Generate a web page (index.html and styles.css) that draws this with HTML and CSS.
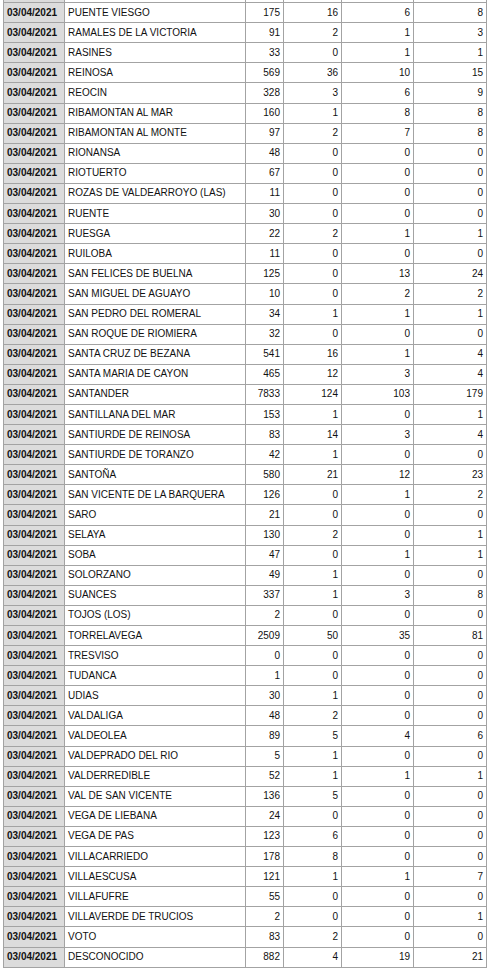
FILE: index.html
```html
<!DOCTYPE html>
<html lang="es">
<head>
<meta charset="utf-8">
<title>Casos por municipio</title>
<link rel="stylesheet" href="styles.css">
</head>
<body>
<table class="grid">
<colgroup>
<col class="c-date"><col class="c-name"><col class="c-n1"><col class="c-n2"><col class="c-n3"><col class="c-n4">
</colgroup>
<tbody>
<tr class="stub"><td class="date"></td><td class="name"></td><td class="num"></td><td class="num"></td><td class="num"></td><td class="num"></td></tr>
<tr><td class="date">03/04/2021</td><td class="name">PUENTE VIESGO</td><td class="num">175</td><td class="num">16</td><td class="num">6</td><td class="num">8</td></tr>
<tr><td class="date">03/04/2021</td><td class="name">RAMALES DE LA VICTORIA</td><td class="num">91</td><td class="num">2</td><td class="num">1</td><td class="num">3</td></tr>
<tr><td class="date">03/04/2021</td><td class="name">RASINES</td><td class="num">33</td><td class="num">0</td><td class="num">1</td><td class="num">1</td></tr>
<tr><td class="date">03/04/2021</td><td class="name">REINOSA</td><td class="num">569</td><td class="num">36</td><td class="num">10</td><td class="num">15</td></tr>
<tr><td class="date">03/04/2021</td><td class="name">REOCIN</td><td class="num">328</td><td class="num">3</td><td class="num">6</td><td class="num">9</td></tr>
<tr><td class="date">03/04/2021</td><td class="name">RIBAMONTAN AL MAR</td><td class="num">160</td><td class="num">1</td><td class="num">8</td><td class="num">8</td></tr>
<tr><td class="date">03/04/2021</td><td class="name">RIBAMONTAN AL MONTE</td><td class="num">97</td><td class="num">2</td><td class="num">7</td><td class="num">8</td></tr>
<tr><td class="date">03/04/2021</td><td class="name">RIONANSA</td><td class="num">48</td><td class="num">0</td><td class="num">0</td><td class="num">0</td></tr>
<tr><td class="date">03/04/2021</td><td class="name">RIOTUERTO</td><td class="num">67</td><td class="num">0</td><td class="num">0</td><td class="num">0</td></tr>
<tr><td class="date">03/04/2021</td><td class="name">ROZAS DE VALDEARROYO (LAS)</td><td class="num">11</td><td class="num">0</td><td class="num">0</td><td class="num">0</td></tr>
<tr><td class="date">03/04/2021</td><td class="name">RUENTE</td><td class="num">30</td><td class="num">0</td><td class="num">0</td><td class="num">0</td></tr>
<tr><td class="date">03/04/2021</td><td class="name">RUESGA</td><td class="num">22</td><td class="num">2</td><td class="num">1</td><td class="num">1</td></tr>
<tr><td class="date">03/04/2021</td><td class="name">RUILOBA</td><td class="num">11</td><td class="num">0</td><td class="num">0</td><td class="num">0</td></tr>
<tr><td class="date">03/04/2021</td><td class="name">SAN FELICES DE BUELNA</td><td class="num">125</td><td class="num">0</td><td class="num">13</td><td class="num">24</td></tr>
<tr><td class="date">03/04/2021</td><td class="name">SAN MIGUEL DE AGUAYO</td><td class="num">10</td><td class="num">0</td><td class="num">2</td><td class="num">2</td></tr>
<tr><td class="date">03/04/2021</td><td class="name">SAN PEDRO DEL ROMERAL</td><td class="num">34</td><td class="num">1</td><td class="num">1</td><td class="num">1</td></tr>
<tr><td class="date">03/04/2021</td><td class="name">SAN ROQUE DE RIOMIERA</td><td class="num">32</td><td class="num">0</td><td class="num">0</td><td class="num">0</td></tr>
<tr><td class="date">03/04/2021</td><td class="name">SANTA CRUZ DE BEZANA</td><td class="num">541</td><td class="num">16</td><td class="num">1</td><td class="num">4</td></tr>
<tr><td class="date">03/04/2021</td><td class="name">SANTA MARIA DE CAYON</td><td class="num">465</td><td class="num">12</td><td class="num">3</td><td class="num">4</td></tr>
<tr><td class="date">03/04/2021</td><td class="name">SANTANDER</td><td class="num">7833</td><td class="num">124</td><td class="num">103</td><td class="num">179</td></tr>
<tr><td class="date">03/04/2021</td><td class="name">SANTILLANA DEL MAR</td><td class="num">153</td><td class="num">1</td><td class="num">0</td><td class="num">1</td></tr>
<tr><td class="date">03/04/2021</td><td class="name">SANTIURDE DE REINOSA</td><td class="num">83</td><td class="num">14</td><td class="num">3</td><td class="num">4</td></tr>
<tr><td class="date">03/04/2021</td><td class="name">SANTIURDE DE TORANZO</td><td class="num">42</td><td class="num">1</td><td class="num">0</td><td class="num">0</td></tr>
<tr><td class="date">03/04/2021</td><td class="name">SANTOÑA</td><td class="num">580</td><td class="num">21</td><td class="num">12</td><td class="num">23</td></tr>
<tr><td class="date">03/04/2021</td><td class="name">SAN VICENTE DE LA BARQUERA</td><td class="num">126</td><td class="num">0</td><td class="num">1</td><td class="num">2</td></tr>
<tr><td class="date">03/04/2021</td><td class="name">SARO</td><td class="num">21</td><td class="num">0</td><td class="num">0</td><td class="num">0</td></tr>
<tr><td class="date">03/04/2021</td><td class="name">SELAYA</td><td class="num">130</td><td class="num">2</td><td class="num">0</td><td class="num">1</td></tr>
<tr><td class="date">03/04/2021</td><td class="name">SOBA</td><td class="num">47</td><td class="num">0</td><td class="num">1</td><td class="num">1</td></tr>
<tr><td class="date">03/04/2021</td><td class="name">SOLORZANO</td><td class="num">49</td><td class="num">1</td><td class="num">0</td><td class="num">0</td></tr>
<tr><td class="date">03/04/2021</td><td class="name">SUANCES</td><td class="num">337</td><td class="num">1</td><td class="num">3</td><td class="num">8</td></tr>
<tr><td class="date">03/04/2021</td><td class="name">TOJOS (LOS)</td><td class="num">2</td><td class="num">0</td><td class="num">0</td><td class="num">0</td></tr>
<tr><td class="date">03/04/2021</td><td class="name">TORRELAVEGA</td><td class="num">2509</td><td class="num">50</td><td class="num">35</td><td class="num">81</td></tr>
<tr><td class="date">03/04/2021</td><td class="name">TRESVISO</td><td class="num">0</td><td class="num">0</td><td class="num">0</td><td class="num">0</td></tr>
<tr><td class="date">03/04/2021</td><td class="name">TUDANCA</td><td class="num">1</td><td class="num">0</td><td class="num">0</td><td class="num">0</td></tr>
<tr><td class="date">03/04/2021</td><td class="name">UDIAS</td><td class="num">30</td><td class="num">1</td><td class="num">0</td><td class="num">0</td></tr>
<tr><td class="date">03/04/2021</td><td class="name">VALDALIGA</td><td class="num">48</td><td class="num">2</td><td class="num">0</td><td class="num">0</td></tr>
<tr><td class="date">03/04/2021</td><td class="name">VALDEOLEA</td><td class="num">89</td><td class="num">5</td><td class="num">4</td><td class="num">6</td></tr>
<tr><td class="date">03/04/2021</td><td class="name">VALDEPRADO DEL RIO</td><td class="num">5</td><td class="num">1</td><td class="num">0</td><td class="num">0</td></tr>
<tr><td class="date">03/04/2021</td><td class="name">VALDERREDIBLE</td><td class="num">52</td><td class="num">1</td><td class="num">1</td><td class="num">1</td></tr>
<tr><td class="date">03/04/2021</td><td class="name">VAL DE SAN VICENTE</td><td class="num">136</td><td class="num">5</td><td class="num">0</td><td class="num">0</td></tr>
<tr><td class="date">03/04/2021</td><td class="name">VEGA DE LIEBANA</td><td class="num">24</td><td class="num">0</td><td class="num">0</td><td class="num">0</td></tr>
<tr><td class="date">03/04/2021</td><td class="name">VEGA DE PAS</td><td class="num">123</td><td class="num">6</td><td class="num">0</td><td class="num">0</td></tr>
<tr><td class="date">03/04/2021</td><td class="name">VILLACARRIEDO</td><td class="num">178</td><td class="num">8</td><td class="num">0</td><td class="num">0</td></tr>
<tr><td class="date">03/04/2021</td><td class="name">VILLAESCUSA</td><td class="num">121</td><td class="num">1</td><td class="num">1</td><td class="num">7</td></tr>
<tr><td class="date">03/04/2021</td><td class="name">VILLAFUFRE</td><td class="num">55</td><td class="num">0</td><td class="num">0</td><td class="num">0</td></tr>
<tr><td class="date">03/04/2021</td><td class="name">VILLAVERDE DE TRUCIOS</td><td class="num">2</td><td class="num">0</td><td class="num">0</td><td class="num">1</td></tr>
<tr><td class="date">03/04/2021</td><td class="name">VOTO</td><td class="num">83</td><td class="num">2</td><td class="num">0</td><td class="num">0</td></tr>
<tr><td class="date">03/04/2021</td><td class="name">DESCONOCIDO</td><td class="num">882</td><td class="num">4</td><td class="num">19</td><td class="num">21</td></tr>
</tbody>
</table>
</body>
</html>
```

FILE: styles.css
```css
html, body {
  margin: 0;
  padding: 0;
  background: #ffffff;
}

body {
  overflow: hidden;
}

.grid {
  margin: -18px 0 0 3px;
  border-collapse: collapse;
  table-layout: fixed;
  width: 483px;
  font-family: "Liberation Sans", Arial, Helvetica, sans-serif;
  font-size: 10px;
  color: #111111;
}

.c-date { width: 61px; }
.c-name { width: 181px; }
.c-n1 { width: 38px; }
.c-n2 { width: 58px; }
.c-n3 { width: 72px; }
.c-n4 { width: 73px; }

.grid tr {
  height: 20.1px;
}

.grid td {
  border: 1px solid #a3a3a3;
  padding: 0 3px;
  line-height: 12px;
  white-space: nowrap;
  overflow: hidden;
  vertical-align: middle;
}

.date {
  background: #dcdcdc;
  font-weight: bold;
  padding-left: 3px;
}

.name {
  padding-left: 4px;
}

.num {
  text-align: right;
}
```
